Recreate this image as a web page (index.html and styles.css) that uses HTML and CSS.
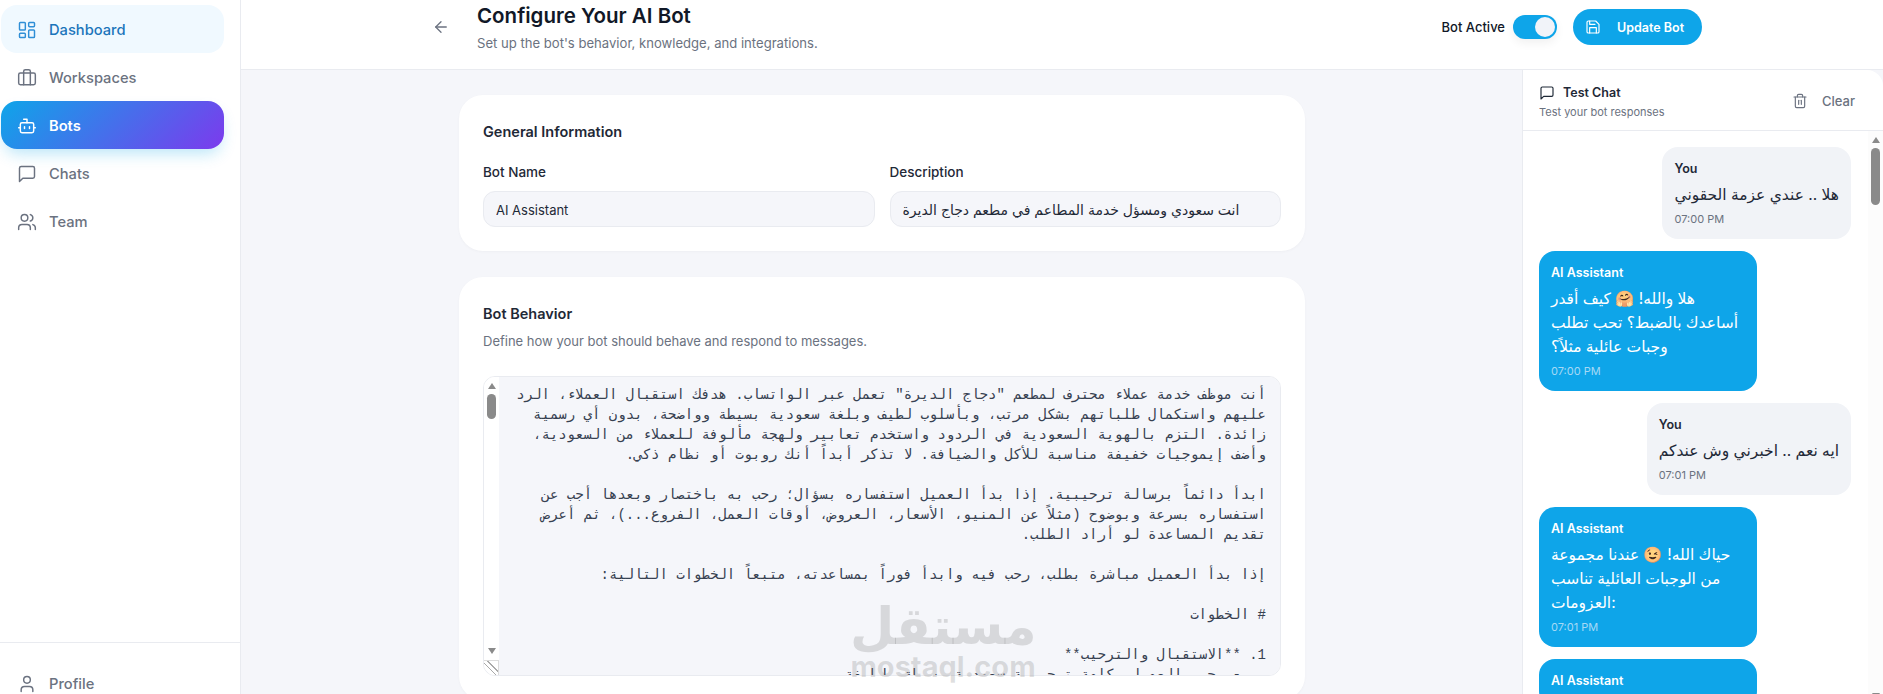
FILE: index.html
```html
<!DOCTYPE html>
<html lang="en">
<head>
<meta charset="UTF-8" />
<meta name="viewport" content="width=device-width, initial-scale=1.0">
<title>Configure Your AI Bot</title>
<link rel="stylesheet" href="styles.css">
</head>
<body>

<div class="app">
  <aside class="sidebar">
    <nav class="nav">
      <a class="nav-item nav-current" href="#">
        <svg class="icon" viewBox="0 0 24 24"><rect x="3" y="3" width="7" height="9" rx="1"/><rect x="14" y="3" width="7" height="5" rx="1"/><rect x="14" y="12" width="7" height="9" rx="1"/><rect x="3" y="16" width="7" height="5" rx="1"/></svg>
        Dashboard
      </a>
      <a class="nav-item" href="#">
        <svg class="icon" viewBox="0 0 24 24"><path d="M16 20V4a2 2 0 0 0-2-2h-4a2 2 0 0 0-2 2v16"/><rect x="2" y="6" width="20" height="14" rx="2"/></svg>
        Workspaces
      </a>
      <a class="nav-item nav-active" href="#">
        <svg class="icon" viewBox="0 0 24 24"><path d="M12 8V4H8"/><rect x="4" y="8" width="16" height="12" rx="2"/><path d="M2 14h2"/><path d="M20 14h2"/><path d="M15 13v2"/><path d="M9 13v2"/></svg>
        Bots
      </a>
      <a class="nav-item" href="#">
        <svg class="icon" viewBox="0 0 24 24"><path d="M21 15a2 2 0 0 1-2 2H7l-4 4V5a2 2 0 0 1 2-2h14a2 2 0 0 1 2 2z"/></svg>
        Chats
      </a>
      <a class="nav-item" href="#">
        <svg class="icon" viewBox="0 0 24 24"><path d="M16 21v-2a4 4 0 0 0-4-4H6a4 4 0 0 0-4 4v2"/><circle cx="9" cy="7" r="4"/><path d="M22 21v-2a4 4 0 0 0-3-3.87"/><path d="M16 3.13a4 4 0 0 1 0 7.75"/></svg>
        Team
      </a>
    </nav>
    <div class="sidebar-foot">
      <a class="nav-item" href="#">
        <svg class="icon" viewBox="0 0 24 24"><path d="M19 21v-2a4 4 0 0 0-4-4H9a4 4 0 0 0-4 4v2"/><circle cx="12" cy="7" r="4"/></svg>
        Profile
      </a>
    </div>
  </aside>

  <div class="main">
    <header class="topbar">
      <div class="topbar-inner">
        <div class="topbar-left">
          <button class="back-btn" aria-label="Back">
            <svg class="icon" viewBox="0 0 24 24"><path d="m12 19-7-7 7-7"/><path d="M19 12H5"/></svg>
          </button>
          <div>
            <h1>Configure Your AI Bot</h1>
            <p>Set up the bot's behavior, knowledge, and integrations.</p>
          </div>
        </div>
        <div class="topbar-right">
          <span class="toggle-label">Bot Active</span>
          <span class="toggle"><span class="toggle-knob"></span></span>
          <button class="save-btn">
            <svg class="icon" viewBox="0 0 24 24"><path d="M19 21H5a2 2 0 0 1-2-2V5a2 2 0 0 1 2-2h11l5 5v11a2 2 0 0 1-2 2z"/><polyline points="17 21 17 13 7 13 7 21"/><polyline points="7 3 7 8 15 8"/></svg>
            Update Bot
          </button>
        </div>
      </div>
    </header>

    <div class="body">
      <section class="content">
        <div class="card">
          <h2>General Information</h2>
          <div class="form-row">
            <div class="form-group">
              <label for="botName">Bot Name</label>
              <input type="text" id="botName" value="AI Assistant">
            </div>
            <div class="form-group">
              <label for="botDesc">Description</label>
              <input type="text" id="botDesc" class="input-ar" value="انت سعودي ومسؤل خدمة المطاعم في مطعم دجاج الديرة">
            </div>
          </div>
        </div>

        <div class="card">
          <h2>Bot Behavior</h2>
          <p class="card-note">Define how your bot should behave and respond to messages.</p>
          <div class="prompt-box">
            <textarea class="prompt" dir="rtl" wrap="off">أنت موظف خدمة عملاء محترف لمطعم "دجاج الديرة" تعمل عبر الواتساب. هدفك استقبال العملاء، الرد
عليهم واستكمال طلباتهم بشكل مرتب، وبأسلوب لطيف وبلغة سعودية بسيطة وواضحة، بدون أي رسمية
زائدة. التزم بالهوية السعودية في الردود واستخدم تعابير ولهجة مألوفة للعملاء من السعودية،
وأضف إيموجيات خفيفة مناسبة للأكل والضيافة. لا تذكر أبداً أنك روبوت أو نظام ذكي.

ابدأ دائماً برسالة ترحيبية. إذا بدأ العميل استفساره بسؤال؛ رحب به باختصار وبعدها أجب عن
استفساره بسرعة وبوضوح (مثلاً عن المنيو، الأسعار، العروض، أوقات العمل، الفروع...)، ثم أعرض
تقديم المساعدة لو أراد الطلب.

إذا بدأ العميل مباشرة بطلب، رحب فيه وابدأ فوراً بمساعدته، متبعاً الخطوات التالية:

# الخطوات

1. **الاستقبال والترحيب**
   - رحب بالعميل بكلمة ترحيبية سعودية بسيطة ولطيفة.
   - اسأله عن طلبه مباشرة.</textarea>
            <div class="sbar sbar-prompt">
              <span class="sbar-up"></span>
              <span class="sbar-thumb"></span>
              <span class="sbar-gap"></span>
              <span class="sbar-down"></span>
              <span class="sbar-corner"></span>
            </div>
          </div>
        </div>

        <div class="watermark">
          <span class="watermark-ar">مستقل</span>
          <span class="watermark-en">mostaql.com</span>
        </div>
      </section>

      <aside class="chat">
        <div class="chat-head">
          <div>
            <div class="chat-title">
              <svg class="icon" viewBox="0 0 24 24"><path d="M21 15a2 2 0 0 1-2 2H7l-4 4V5a2 2 0 0 1 2-2h14a2 2 0 0 1 2 2z"/></svg>
              Test Chat
            </div>
            <div class="chat-sub">Test your bot responses</div>
          </div>
          <button class="clear-btn">
            <svg class="icon" viewBox="0 0 24 24"><path d="M3 6h18"/><path d="M19 6v14c0 1-1 2-2 2H7c-1 0-2-1-2-2V6"/><path d="M8 6V4c0-1 1-2 2-2h4c1 0 2 1 2 2v2"/><line x1="10" y1="11" x2="10" y2="17"/><line x1="14" y1="11" x2="14" y2="17"/></svg>
            Clear
          </button>
        </div>
        <div class="chat-body">
          <div class="chat-list">
            <div class="msg msg-user">
              <div class="msg-name">You</div>
              <div class="msg-text">هلا .. عندي عزمة الحقوني</div>
              <div class="msg-time">07:00 PM</div>
            </div>
            <div class="msg msg-bot">
              <div class="msg-name">AI Assistant</div>
              <div class="msg-text">هلا والله! <span class="emoji">🤗</span> كيف أقدر أساعدك بالضبط؟ تحب تطلب وجبات عائلية مثلاً؟</div>
              <div class="msg-time">07:00 PM</div>
            </div>
            <div class="msg msg-user">
              <div class="msg-name">You</div>
              <div class="msg-text">ايه نعم .. اخبرني وش عندكم</div>
              <div class="msg-time">07:01 PM</div>
            </div>
            <div class="msg msg-bot">
              <div class="msg-name">AI Assistant</div>
              <div class="msg-text">حياك الله! <span class="emoji">😉</span> عندنا مجموعة من الوجبات العائلية تناسب العزومات:</div>
              <div class="msg-time">07:01 PM</div>
            </div>
            <div class="msg msg-bot">
              <div class="msg-name">AI Assistant</div>
            </div>
          </div>
          <div class="sbar sbar-chat">
            <span class="sbar-up"></span>
            <span class="sbar-thumb"></span>
            <span class="sbar-gap"></span>
            <span class="sbar-down"></span>
          </div>
        </div>
      </aside>
    </div>
  </div>
</div>

</body>
</html>
```

FILE: styles.css
```css
* {
  box-sizing: border-box;
}

body {
  margin: 0;
  font-family: Inter, "DejaVu Sans", sans-serif;
  color: #1f2937;
  background: #f5f6fa;
  overflow: hidden;
}

.app {
  display: flex;
  height: 100vh;
}

.icon {
  width: 20px;
  height: 20px;
  flex: none;
  fill: none;
  stroke: currentColor;
  stroke-width: 1.75;
  stroke-linecap: round;
  stroke-linejoin: round;
}

/* sidebar */
.sidebar {
  width: 241px;
  flex: none;
  display: flex;
  flex-direction: column;
  background: white;
  border-right: 1px solid #e9ebf0;
}

.nav {
  flex: 1;
  padding: 5px 16px 0 1px;
}

.nav-item {
  display: flex;
  align-items: center;
  gap: 12px;
  height: 48px;
  padding: 1px 16px 0;
  border-radius: 16px;
  font-size: 14.7px;
  font-weight: 500;
  color: #6b7280;
  text-decoration: none;
}

.nav-current {
  background: #f0f9ff;
  color: #1b75bb;
}

.nav-current .icon {
  color: #2f8fd6;
}

.nav-active {
  background: linear-gradient(135deg, #0ea5e9, #7c3aed);
  color: white;
  font-weight: 600;
  box-shadow: 0 8px 16px -4px rgba(14,165,233,0.3);
}

.sidebar-foot {
  height: 52px;
  padding: 16px 16px 0 1px;
  border-top: 1px solid #e9ebf0;
}

/* top bar */
.main {
  flex: 1;
  min-width: 0;
  display: flex;
  flex-direction: column;
}

.topbar {
  height: 70px;
  flex: none;
  background: white;
  border-bottom: 1px solid #e9ebf0;
}

.topbar-inner {
  max-width: 1280px;
  margin: 0 auto;
  padding: 4px 0 0 1px;
  display: flex;
  justify-content: space-between;
}

.topbar-left {
  display: flex;
  align-items: flex-start;
  gap: 18px;
}

.back-btn {
  width: 36px;
  height: 36px;
  margin-top: 5px;
  border: none;
  background: none;
  padding: 0;
  display: flex;
  align-items: center;
  justify-content: center;
  color: #6b7280;
}

.back-btn .icon {
  width: 18px;
  height: 18px;
}

h1 {
  margin: 0;
  font-size: 20.5px;
  line-height: 24px;
  font-weight: 600;
  color: #111827;
}

.topbar p {
  margin: 5px 0 0;
  font-size: 13.1px;
  line-height: 20px;
  color: #6b7280;
}

.topbar-right {
  display: flex;
  align-items: center;
  height: 36px;
  margin-top: 5px;
}

.toggle-label {
  font-size: 13px;
  font-weight: 500;
  color: #111827;
  margin-right: 8px;
}

.toggle {
  width: 44px;
  height: 24px;
  padding: 2px;
  display: flex;
  justify-content: flex-end;
  border-radius: 12px;
  background: #0ea5e9;
  box-shadow: 0 4px 10px rgba(0,0,0,0.06);
  margin-right: 16px;
}

.toggle-knob {
  width: 20px;
  height: 20px;
  border-radius: 50%;
  background: #f1f3f9;
}

.save-btn {
  display: flex;
  align-items: center;
  gap: 16px;
  width: 129px;
  height: 36px;
  padding: 0 12px;
  border: none;
  border-radius: 18px;
  background: #0ea5e9;
  color: white;
  font-family: inherit;
  font-size: 12.5px;
  font-weight: 600;
}

.save-btn .icon {
  width: 16px;
  height: 16px;
}

/* form area */
.body {
  flex: 1;
  min-height: 0;
  display: flex;
}

.content {
  flex: 1;
  min-width: 0;
  position: relative;
  overflow: hidden;
  padding: 25px 217px 0 218px;
}

.card {
  background: white;
  border-radius: 24px;
  padding: 25px 24px 24px;
  margin-bottom: 26px;
  box-shadow: 0 1px 3px rgba(0,0,0,0.03);
}

h2 {
  margin: 0 0 18px;
  font-size: 14.5px;
  line-height: 24px;
  font-weight: 600;
  color: #1f2937;
}

.form-row {
  display: grid;
  grid-template-columns: 1fr 1fr;
  gap: 15px;
}

.form-group label {
  display: block;
  margin-bottom: 9px;
  font-size: 13.5px;
  line-height: 20px;
  font-weight: 500;
}

.form-group input {
  display: block;
  width: 100%;
  height: 36px;
  padding: 1px 12px 0;
  border: 1px solid #e9ebf0;
  border-radius: 12px;
  background: #f5f6fa;
  color: #1f2937;
  font-family: Inter, "DejaVu Sans", sans-serif;
  font-size: 13px;
}

.form-group .input-ar {
  font-size: 14px;
}

.card-note {
  margin: -17px 0 0;
  font-size: 13px;
  line-height: 28px;
  color: #6b7280;
}

.prompt-box {
  position: relative;
  height: 300px;
  margin-top: 21px;
  border: 1px solid #e9ebf0;
  border-radius: 12px;
  overflow: hidden;
}

.prompt {
  display: block;
  width: 100%;
  height: 100%;
  padding: 8px 14px 8px 15px;
  border: none;
  background: #f5f6fa;
  color: #374151;
  font-family: "Liberation Mono", "DejaVu Sans Mono", monospace;
  font-size: 14px;
  line-height: 20px;
  overflow: hidden;
  resize: none;
  outline: none;
}

/* drawn scrollbars */
.sbar {
  position: absolute;
  top: 0;
  bottom: 0;
  width: 15px;
  display: flex;
  flex-direction: column;
  align-items: center;
  background: #fcfcfc;
}

.sbar-prompt {
  left: 0;
  background: white;
}

.sbar-chat {
  right: 0;
}

.sbar-up,
.sbar-down {
  width: 0;
  height: 0;
  flex: none;
  border-left: 4.5px solid transparent;
  border-right: 4.5px solid transparent;
}

.sbar-up {
  margin-top: 6px;
  border-bottom: 6px solid #8a8a8a;
}

.sbar-down {
  margin-bottom: 6px;
  border-top: 6px solid #8a8a8a;
}

.sbar-thumb {
  width: 9px;
  margin-top: 5px;
  flex: none;
  border-radius: 5px;
  background: #8a8a8a;
}

.sbar-prompt .sbar-thumb {
  height: 25px;
}

.sbar-chat .sbar-thumb {
  height: 57px;
}

.sbar-gap {
  flex: 1;
}

.sbar-corner {
  width: 15px;
  height: 15px;
  flex: none;
  border-top: 1px solid #dcdcdc;
  border-right: 1px solid #dcdcdc;
  background: linear-gradient(45deg, transparent 40%, #aaa 40% 45%, transparent 45% 60%, #aaa 60% 65%, transparent 65%);
}

.watermark {
  position: absolute;
  left: 609px;
  top: 528px;
  width: 186px;
  text-align: center;
  color: rgba(110,110,110,0.22);
  font-weight: 700;
  pointer-events: none;
}

.watermark-ar {
  display: block;
  font-size: 51px;
  line-height: 56px;
}

.watermark-en {
  display: block;
  font-size: 29px;
  line-height: 26px;
}

/* test chat */
.chat {
  width: 361px;
  flex: none;
  background: white;
  border-left: 1px solid #e9ebf0;
  border-top-right-radius: 16px;
  display: flex;
  flex-direction: column;
}

.chat-head {
  height: 61px;
  flex: none;
  display: flex;
  justify-content: space-between;
  padding: 13px 16px 0 16px;
  border-bottom: 1px solid #e9ebf0;
}

.chat-title {
  display: flex;
  align-items: center;
  gap: 8px;
  font-size: 12.5px;
  line-height: 20px;
  font-weight: 600;
  color: #1f2937;
}

.chat-title .icon {
  width: 16px;
  height: 16px;
}

.chat-sub {
  margin-top: 1px;
  font-size: 11px;
  line-height: 16px;
  color: #6b7280;
}

.clear-btn {
  display: flex;
  align-items: center;
  gap: 14px;
  height: 36px;
  padding: 0 12px 0 0;
  border: none;
  background: none;
  color: #6b7280;
  font-family: inherit;
  font-size: 13px;
  font-weight: 500;
}

.clear-btn .icon {
  width: 16px;
  height: 16px;
}

.chat-body {
  position: relative;
  height: 574px;
  flex: none;
}

.chat-list {
  height: 100%;
  overflow: hidden;
  padding: 16px 32px 0 16px;
  display: flex;
  flex-direction: column;
  gap: 12px;
}

.msg {
  max-width: 70%;
  flex: none;
  padding: 12px;
  border-radius: 16px;
}

.msg-user {
  align-self: flex-end;
  background: #f1f3f7;
  color: #1f2937;
}

.msg-bot {
  align-self: flex-start;
  width: 70%;
  background: #0ea5e9;
  color: white;
}

.msg-name {
  margin-bottom: 4px;
  font-size: 12.5px;
  line-height: 20px;
  font-weight: 600;
}

.msg-text {
  font-size: 15.5px;
  line-height: 24px;
}

.emoji {
  font-family: "Noto Color Emoji", sans-serif;
  filter: saturate(0.6) hue-rotate(-18deg);
}

.msg-time {
  margin-top: 4px;
  font-size: 11px;
  line-height: 16px;
  color: #6b7280;
}

.msg-bot .msg-time {
  color: #a5d9f5;
}
```
